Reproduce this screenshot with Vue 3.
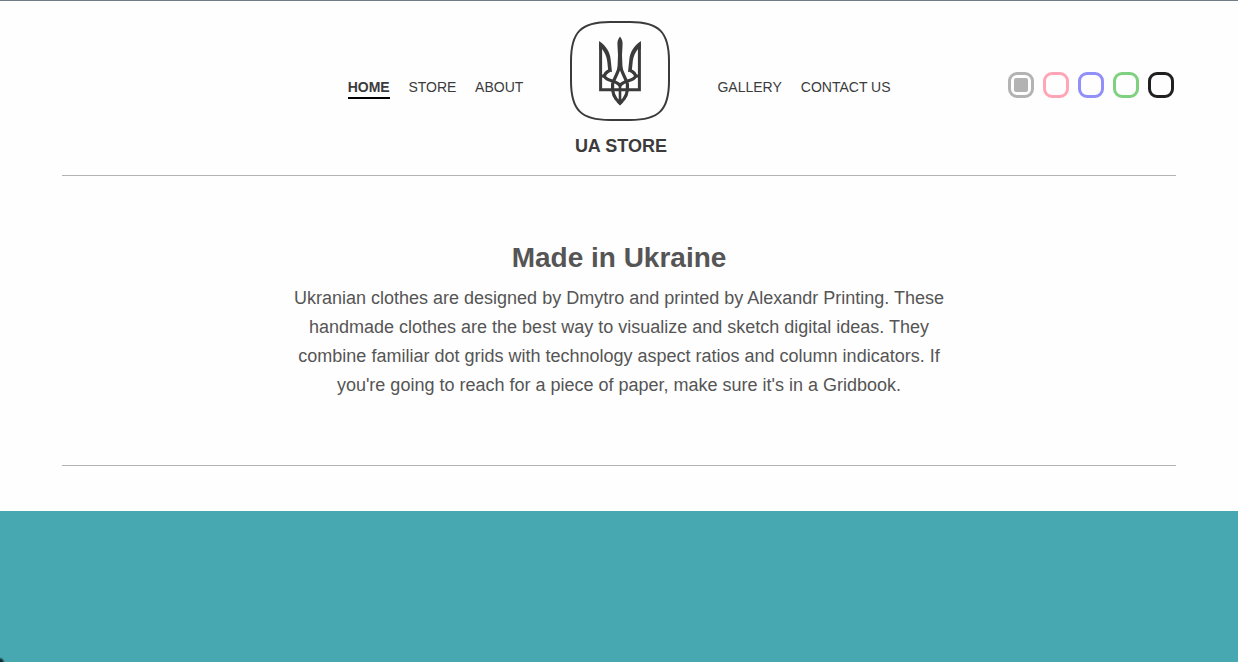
<script setup>
const left = ['HOME', 'STORE', 'ABOUT']
const right = ['GALLERY', 'CONTACT US']
const themes = ['gray', 'pink', 'blue', 'green', 'black']
</script>

<template>
  <div class="page">
    <header class="header">
      <nav class="nav nav-left">
        <a v-for="item in left" :key="item" :class="{ active: item === 'HOME' }">{{ item }}</a>
      </nav>
      <div class="brand">
        <svg class="logo" viewBox="0 0 100 100" width="100" height="100" fill="none" stroke="#3b3b3b">
          <path stroke-width="2" d="M40 1H60C89 1 99 11 99 40V60C99 89 89 99 60 99H40C11 99 1 89 1 60V40C1 11 11 1 40 1Z" />
          <path stroke-width="3" d="M30.600 22V68.700H69.400V22" />
          <g stroke-width="3.200">
            <path d="M39.700 49.500C36.500 51 34.500 52.500 34.500 55.500C37.500 61 45 58.500 50 64.500C55 58.500 62.500 61 65.500 55.500C65.500 52.500 63.500 51 60.300 49.500" />
            <path d="M31 55H35M65 55H69" />
            <path d="M49.800 44C48.500 52 44 57 42.600 63C41.800 71 44 77.500 50 82C56 77.500 58.200 71 57.400 63C56 57 51.500 52 50.200 44" />
            <path stroke-width="2.600" d="M50 63V82" />
          </g>
          <g fill="#3b3b3b" stroke="none">
            <path d="M29.100 20C36.500 25 40 31.500 40.600 38L42 51L38.300 50.500L37.200 40C36.500 35 34.500 31 32 28L29.100 28Z" />
            <path d="M70.900 20C63.500 25 60 31.500 59.400 38L58 51L61.700 50.500L62.800 40C63.500 35 65.500 31 68 28L70.900 28Z" />
            <path d="M50 15.500C52 18 53 20.500 52.500 25L52 34L52.600 49H47.400L48 34L47.500 25C47 20.500 48 18 50 15.500ZM46.500 81L50 84.500L53.500 81Z" />
          </g>
        </svg>
        <div class="name">UA STORE</div>
      </div>
      <nav class="nav nav-right">
        <a v-for="item in right" :key="item">{{ item }}</a>
      </nav>
      <div class="themes">
        <span v-for="theme in themes" :key="theme" class="swatch" :class="theme"></span>
      </div>
    </header>
    <section class="intro">
      <h1>Made in Ukraine</h1>
      <p>Ukranian clothes are designed by Dmytro and printed by Alexandr Printing. These handmade clothes are the best way to visualize and sketch digital ideas. They combine familiar dot grids with technology aspect ratios and column indicators. If you're going to reach for a piece of paper, make sure it's in a Gridbook.</p>
    </section>
    <div class="banner"></div>
  </div>
</template>

<style>
body {
  background: #fefefe;
  overflow: hidden;
}
</style>

<style scoped>
.page {
  box-sizing: border-box;
  height: 662px;
  border-top: 1px solid #717c85;
  display: flex;
  flex-direction: column;
  font-family: "Liberation Sans", Arial, sans-serif;
}
.header {
  box-sizing: border-box;
  height: 175px;
  margin: 0 62px;
  border-bottom: 1px solid #b3b3b3;
  display: grid;
  grid-template-columns: 461.3px 194.2px 1fr auto;
}
.nav {
  display: flex;
  gap: 18.7px;
  padding-top: 78px;
  font-size: 14px;
  line-height: 16px;
  color: #3b3b3b;
  white-space: nowrap;
}
.nav-left {
  justify-content: flex-end;
}
.nav-right {
  gap: 19px;
}
.nav a {
  height: 18px;
}
.nav .active {
  font-weight: bold;
  border-bottom: 2px solid #000;
}
.brand {
  display: flex;
  flex-direction: column;
  align-items: center;
  padding-top: 20px;
}
.logo {
  display: block;
}
.name {
  margin-top: 15px;
  padding-left: 1px;
  font-size: 18px;
  line-height: 21px;
  font-weight: bold;
  color: #3b3b3b;
}
.themes {
  display: flex;
  gap: 9px;
  padding: 71px 2px 0 0;
}
.swatch {
  box-sizing: border-box;
  width: 26px;
  height: 26px;
  border: 3px solid;
  border-radius: 9px;
}
.gray {
  color: #b3b3b3;
  padding: 3px;
}
.gray::before {
  content: "";
  display: block;
  width: 14px;
  height: 14px;
  border-radius: 2px;
  background: currentColor;
}
.pink { color: #ffa5b6; }
.blue { color: #9090f8; }
.green { color: #7fd07f; }
.black { color: #202020; }
.intro {
  box-sizing: border-box;
  height: 290px;
  margin: 0 62px;
  padding-top: 65px;
  border-bottom: 1px solid #b3b3b3;
  text-align: center;
  color: #555;
}
h1 {
  margin: 0;
  font-size: 28px;
  line-height: 34px;
}
p {
  width: 660px;
  margin: 9px auto 0;
  font-size: 18px;
  line-height: 29px;
}
.banner {
  flex: 1;
  margin-top: 45px;
  background: radial-gradient(circle at 0 100%, #10262a 0 2px, transparent 5px), #48a8b2;
}
</style>
